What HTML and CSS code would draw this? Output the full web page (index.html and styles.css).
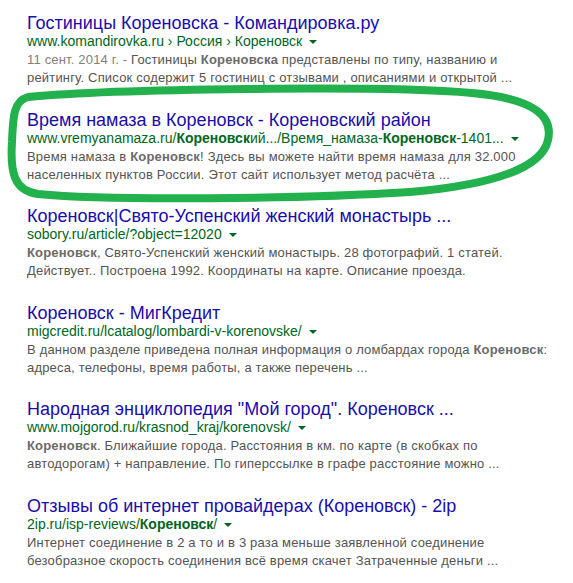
FILE: index.html
```html
<!DOCTYPE html>
<html lang="ru">
<head>
<meta charset="utf-8">
<link rel="stylesheet" href="styles.css">
</head>
<body>
<div class="results">
  <div class="g">
    <h3 class="r"><a href="#">Гостиницы Кореновска - Командировка.ру</a></h3>
    <div class="url"><cite>www.komandirovka.ru › Россия › Кореновск</cite><span class="arrow"></span></div>
    <div class="st"><span class="date">11 сент. 2014 г. - </span>Гостиницы <b>Кореновска</b> представлены по типу, названию и рейтингу. Список содержит 5 гостиниц с отзывами , описаниями и открытой ...</div>
  </div>
  <div class="g">
    <h3 class="r"><a href="#">Время намаза в Кореновск - Кореновский район</a></h3>
    <div class="url"><cite>www.vremyanamaza.ru/<b>Кореновск</b>ий.../Время_намаза-<b>Кореновск</b>-1401...</cite><span class="arrow"></span></div>
    <div class="st">Время намаза в <b>Кореновск</b>! Здесь вы можете найти время намаза для 32.000 населенных пунктов России. Этот сайт использует метод расчёта ...</div>
  </div>
  <div class="g">
    <h3 class="r"><a href="#">Кореновск|Свято-Успенский женский монастырь ...</a></h3>
    <div class="url"><cite>sobory.ru/article/?object=12020</cite><span class="arrow"></span></div>
    <div class="st"><b>Кореновск</b>, Свято-Успенский женский монастырь. 28 фотографий. 1 статей. Действует.. Построена 1992. Координаты на карте. Описание проезда.</div>
  </div>
  <div class="g">
    <h3 class="r"><a href="#">Кореновск - МигКредит</a></h3>
    <div class="url"><cite>migcredit.ru/lcatalog/lombardi-v-korenovske/</cite><span class="arrow"></span></div>
    <div class="st">В данном разделе приведена полная информация о ломбардах города <b>Кореновск</b>: адреса, телефоны, время работы, а также перечень ...</div>
  </div>
  <div class="g">
    <h3 class="r"><a href="#">Народная энциклопедия "Мой город". Кореновск ...</a></h3>
    <div class="url"><cite>www.mojgorod.ru/krasnod_kraj/korenovsk/</cite><span class="arrow"></span></div>
    <div class="st"><b>Кореновск</b>. Ближайшие города. Расстояния в км. по карте (в скобках по автодорогам) + направление. По гиперссылке в графе расстояние можно ...</div>
  </div>
  <div class="g">
    <h3 class="r"><a href="#">Отзывы об интернет провайдерах (Кореновск) - 2ip</a></h3>
    <div class="url"><cite>2ip.ru/isp-reviews/<b>Кореновск</b>/</cite><span class="arrow"></span></div>
    <div class="st">Интернет соединение в 2 а то и в 3 раза меньше заявленной соединение безобразное скорость соединения всё время скачет Затраченные деньги ...</div>
  </div>
</div>
<svg class="mark" width="573" height="583" viewBox="0 0 573 583" aria-hidden="true">
  <path d="M 28 97 C 110 89, 380 85, 472 93 C 538 99, 553 118, 548 140 C 543 164, 505 184, 410 192 C 300 199, 110 201, 38 194 C 14 191, 10 172, 12 142 C 13 115, 14 101, 28 97 Z"/>
</svg>
</body>
</html>
```
FILE: styles.css
```css
html, body {
  margin: 0;
  padding: 0;
  background: #fff;
}
body {
  font-family: "Liberation Sans", Arial, sans-serif;
  width: 573px;
  height: 583px;
  overflow: hidden;
  position: relative;
}
.results {
  padding: 13px 0 0 27px;
  width: 525px;
  display: flex;
  flex-direction: column;
  gap: 22.6px;
}
.g {
  display: flex;
  flex-direction: column;
}
.r {
  margin: 0;
  font-size: 18px;
  font-weight: normal;
  line-height: 20px;
  white-space: nowrap;
}
.r a {
  color: #1a0dab;
  text-decoration: none;
}
.url {
  font-size: 14px;
  line-height: 16px;
  color: #006621;
  white-space: nowrap;
  display: flex;
  align-items: center;
}
.url cite {
  font-style: normal;
}
.url b {
  font-weight: bold;
}
.arrow {
  display: inline-block;
  width: 0;
  height: 0;
  margin-left: 7px;
  margin-top: 2px;
  border-left: 4px solid transparent;
  border-right: 4px solid transparent;
  border-top: 4px solid #006621;
}
.st {
  margin-top: 2px;
  font-size: 13px;
  letter-spacing: 0.18px;
  line-height: 18px;
  color: #545454;
}
.st b {
  color: #6a6a6a;
}
.date {
  color: #808080;
}
.mark {
  position: absolute;
  left: 0;
  top: 0;
  pointer-events: none;
}
.mark path {
  fill: none;
  stroke: #22b14c;
  stroke-width: 8;
  stroke-linecap: round;
  stroke-linejoin: round;
}
```
